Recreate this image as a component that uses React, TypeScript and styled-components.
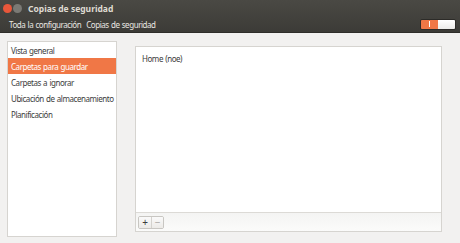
import React from "react";
import styled, { createGlobalStyle } from "styled-components";

const Global = createGlobalStyle`
  html, body { margin: 0; padding: 0; background: #f2f1f0; }
  body { font-family: "Noto Sans", "DejaVu Sans", sans-serif; }
  * { box-sizing: border-box; }
`;

const Window = styled.div`
  width: 460px;
  height: 243px;
  display: flex;
  flex-direction: column;
  background: #f2f1f0;
  overflow: hidden;
`;

const Header = styled.div`
  height: 33px;
  background: linear-gradient(#4a4944, #3c3b37);
  border-bottom: 1px solid #2e2d2a;
  display: flex;
  flex-direction: column;
`;

const TitleRow = styled.div`
  height: 16px;
  display: flex;
  align-items: center;
  padding-left: 3px;
  gap: 1px;
`;

const Dot = styled.span<{ $c: string }>`
  width: 9px;
  height: 9px;
  border-radius: 50%;
  background: ${(p) => p.$c};
  display: inline-block;
`;

const Title = styled.span`
  margin-left: 5px;
  color: #dfdbd2;
  font-weight: bold;
  font-size: 8.5px;
`;

const ToolRow = styled.div`
  flex: 1;
  display: flex;
  align-items: center;
  padding: 0 4px 0 7px;
  gap: 1px;
`;

const Crumb = styled.span`
  color: #e8e6e1;
  font-size: 8px;
  letter-spacing: -0.45px;
  word-spacing: 0.6px;
  padding: 1px 2px;
`;

const Spacer = styled.div`
  flex: 1;
`;

const Switch = styled.div`
  width: 36px;
  height: 11px;
  display: flex;
  border-radius: 2px;
  overflow: hidden;
  border: 1px solid #2c2b28;
`;

const SwOn = styled.div`
  flex: 1;
  background: #f07746;
  display: flex;
  align-items: center;
  justify-content: center;
  &::after {
    content: "";
    width: 1px;
    height: 6px;
    background: #fff;
  }
`;

const SwKnob = styled.div`
  flex: 1;
  background: linear-gradient(#ffffff, #ecebe9);
`;

const Body = styled.div`
  flex: 1;
  display: flex;
  padding: 8px 18px 6px 7px;
  gap: 18px;
`;

const Sidebar = styled.div`
  width: 110px;
  background: #fff;
  border: 1px solid #d6d4d0;
  display: flex;
  flex-direction: column;
`;

const Item = styled.div<{ $sel?: boolean }>`
  height: 16px;
  display: flex;
  align-items: center;
  padding-left: 3px;
  font-size: 8px;
  letter-spacing: -0.45px;
  word-spacing: 0.6px;
  color: ${(p) => (p.$sel ? "#fff" : "#3c3c3c")};
  background: ${(p) => (p.$sel ? "#f07746" : "transparent")};
  white-space: nowrap;
`;

const Panel = styled.div`
  flex: 1;
  margin-top: 5px;
  margin-bottom: 5px;
  border: 1px solid #d6d4d0;
  display: flex;
  flex-direction: column;
  background: #f7f7f6;
`;

const List = styled.div`
  flex: 1;
  background: #fff;
  padding: 6px 6px;
  font-size: 8px;
  letter-spacing: -0.45px;
  word-spacing: 0.6px;
  color: #3c3c3c;
  border-bottom: 1px solid #dcdad6;
`;

const BtnBar = styled.div`
  height: 18px;
  display: flex;
  align-items: center;
  padding-left: 2px;
  background: linear-gradient(#f4f4f3, #fbfbfa);
`;

const BtnGroup = styled.div`
  display: flex;
  border: 1px solid #c8c6c2;
  border-radius: 2px;
  overflow: hidden;
`;

const Btn = styled.div<{ $dim?: boolean }>`
  width: 12px;
  height: 11px;
  display: flex;
  align-items: center;
  justify-content: center;
  font-size: 10px;
  line-height: 1;
  color: ${(p) => (p.$dim ? "#a8a6a2" : "#3c3c3c")};
  background: linear-gradient(#fafafa, #eceae7);
  & + & { border-left: 1px solid #d4d2ce; }
`;

export default function App() {
  return (
    <>
      <Global />
      <Window>
        <Header>
          <TitleRow>
            <Dot $c="#e9573a" />
            <Dot $c="#7b7a75" />
            <Title>Copias de seguridad</Title>
          </TitleRow>
          <ToolRow>
            <Crumb>Toda la configuración</Crumb>
            <Crumb>Copias de seguridad</Crumb>
            <Spacer />
            <Switch>
              <SwOn />
              <SwKnob />
            </Switch>
          </ToolRow>
        </Header>
        <Body>
          <Sidebar>
            <Item>Vista general</Item>
            <Item $sel>Carpetas para guardar</Item>
            <Item>Carpetas a ignorar</Item>
            <Item>Ubicación de almacenamiento</Item>
            <Item>Planificación</Item>
          </Sidebar>
          <Panel>
            <List>Home (noe)</List>
            <BtnBar>
              <BtnGroup>
                <Btn>+</Btn>
                <Btn $dim>−</Btn>
              </BtnGroup>
            </BtnBar>
          </Panel>
        </Body>
      </Window>
    </>
  );
}
